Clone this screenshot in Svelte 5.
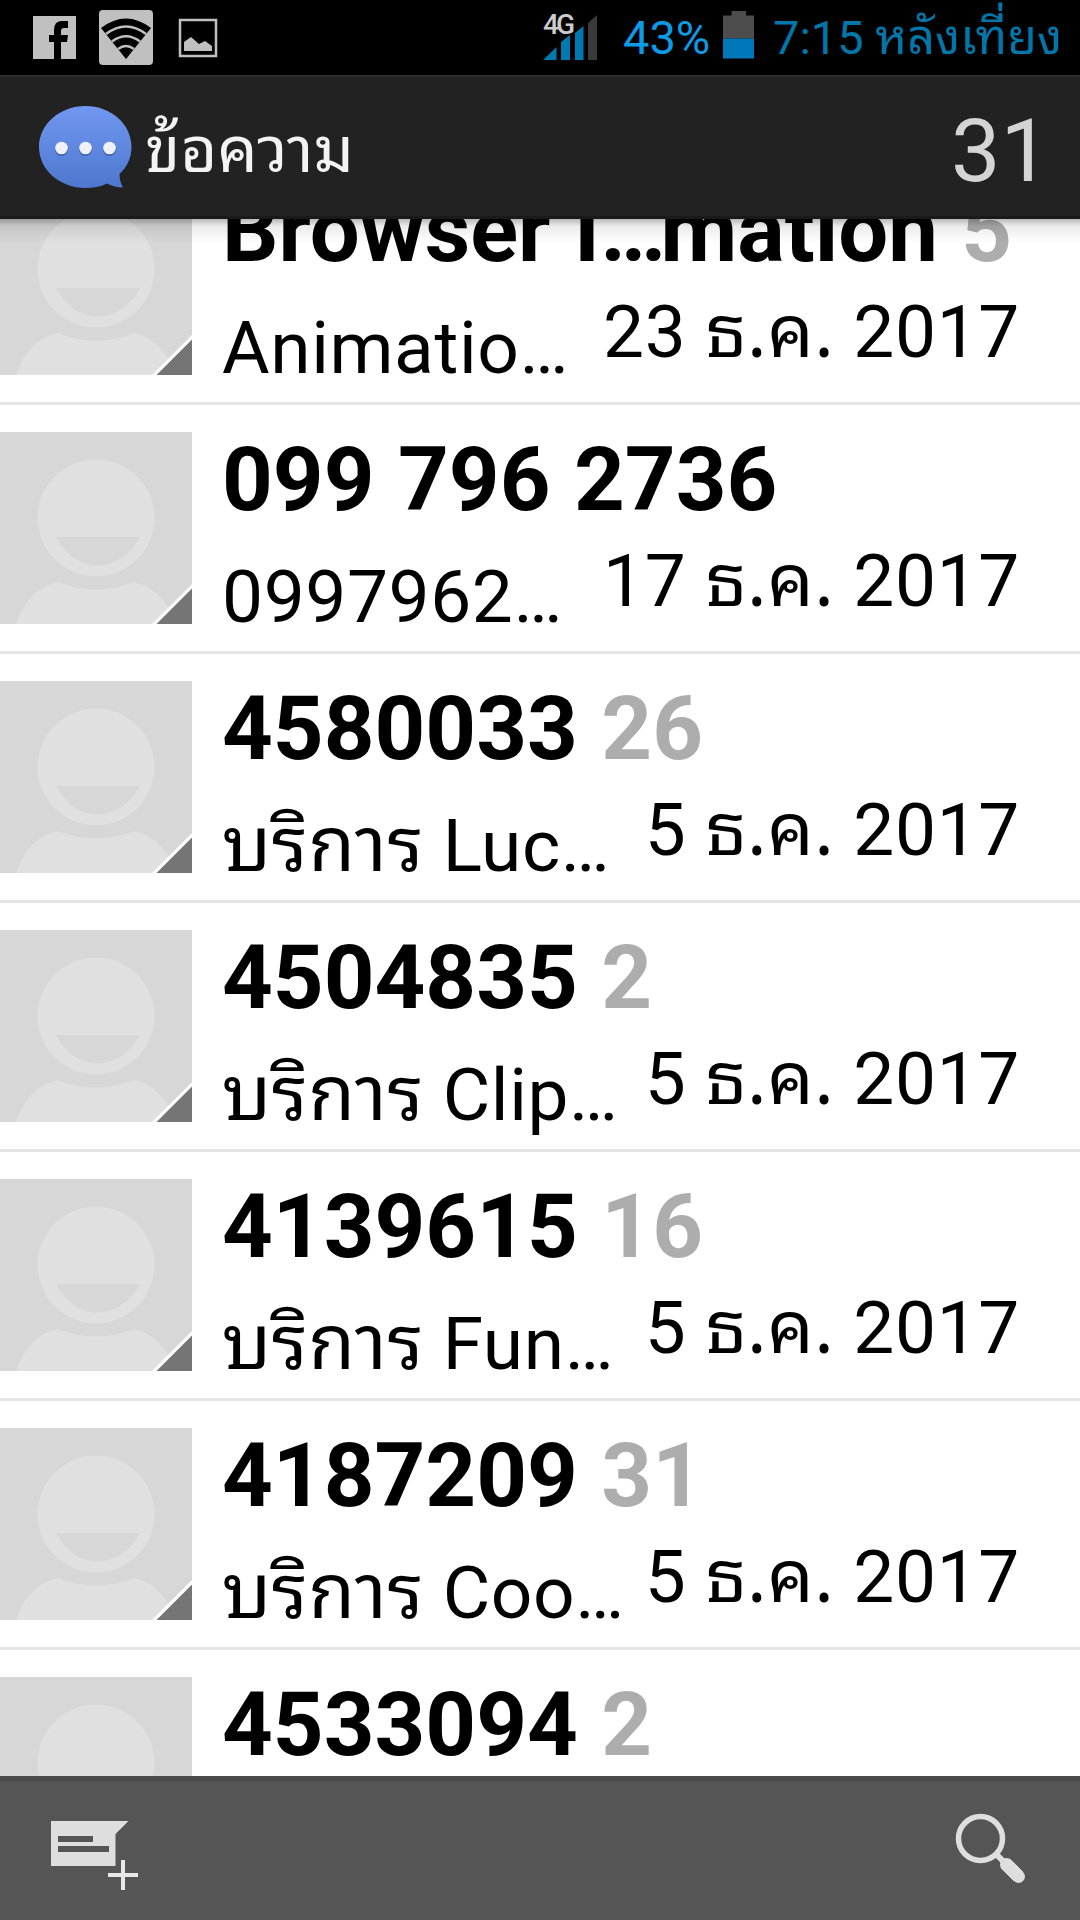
<script>
	const conversations = [
		{ id: 1, name: 'Browser I', nameEnd: 'mation', count: 5, thai: '', snippet: 'Animatio…', date: ['23', '2017'] },
		{ id: 2, name: '099 796 2736', count: null, thai: '', snippet: '0997962…', date: ['17', '2017'] },
		{ id: 3, name: '4580033', count: 26, thai: 'บริการ', snippet: 'Luc…', date: ['5', '2017'] },
		{ id: 4, name: '4504835', count: 2, thai: 'บริการ', snippet: 'Clip…', date: ['5', '2017'] },
		{ id: 5, name: '4139615', count: 16, thai: 'บริการ', snippet: 'Fun…', date: ['5', '2017'] },
		{ id: 6, name: '4187209', count: 31, thai: 'บริการ', snippet: 'Coo…', date: ['5', '2017'] },
		{ id: 7, name: '4533094', count: 2, thai: '', snippet: '', date: null }
	];
	const unread = 31;
</script>

<div class="screen">
	<div class="status-bar">
		<svg class="notifications" width="190" height="60" viewBox="30 8 190 60">
			<path fill="#c0c0c0" d="M33 16H76V59H61V42H67L68 35H61V31Q61 28 64 28H68V21H62Q54 21 54 30V35H49V42H54V59H33Z" />
			<rect x="99" y="10" width="54" height="55" rx="4" fill="#c0c0c0" />
			<path d="M101 28Q126 9 151 28L126 59Z" fill="#000" />
			<path d="M106 34Q126 19 146 34M112 41.500Q126 31 140 41.500M118 49Q126 43 134 49" fill="none" stroke="#c0c0c0" stroke-width="2.500" />
			<rect x="180" y="20" width="36" height="36" fill="none" stroke="#c0c0c0" stroke-width="2.500" />
			<path d="M184 51V42L191 37L199 44L205 41L212 46V51Z" fill="#c0c0c0" />
		</svg>
		<div class="signal">
			<span class="network">4G</span>
			<svg width="55" height="46" viewBox="543 15 55 46">
				<path d="M543 60L556.500 47V60ZM561 60V42L570 35V60ZM575 60V33L583.500 26V60Z" fill="#0078b0" />
				<path d="M588 60V23L597 15V60Z" fill="#3a3a3a" />
			</svg>
		</div>
		<span class="percent">43%</span>
		<svg class="battery" width="31" height="48" viewBox="0 0 31 48">
			<path d="M0 4.500H8.500V0H23V4.500H31V27.500H0Z" fill="#4d4d4d" />
			<rect y="27.500" width="31" height="20" fill="#0077b8" />
		</svg>
		<span class="clock">7:15 <span class="thai">หลังเที่ยง</span></span>
	</div>

	<header>
		<svg class="logo" width="94" height="84" viewBox="38 105 94 84">
			<defs>
				<linearGradient id="bubble" x1="0" y1="0" x2="0" y2="1">
					<stop offset="0" stop-color="#7297f2" />
					<stop offset="1" stop-color="#4d78cd" />
				</linearGradient>
			</defs>
			<path fill="url(#bubble)" d="M85.500 106C111 106 131.500 124 131.500 147C131.500 158 127 167 119.500 174C119.500 180 121 184 123 187.500C117 187.500 111 185.500 107 183.500C100 187 93 188 85.500 188C60 188 39 170 39 147C39 124 60 106 85.500 106Z" />
			<g fill="#365fae">
				<circle cx="61.500" cy="149.500" r="6.500" />
				<circle cx="85.500" cy="149.500" r="6.500" />
				<circle cx="109.500" cy="149.500" r="6.500" />
			</g>
			<g fill="#f0f1f6">
				<circle cx="61.500" cy="148" r="6.300" />
				<circle cx="85.500" cy="148" r="6.300" />
				<circle cx="109.500" cy="148" r="6.300" />
			</g>
		</svg>
		<h1>ข้อความ</h1>
		<span class="unread">{unread}</span>
	</header>

	<main>
		<div class="list">
			{#each conversations as item (item.id)}
				<div class="row">
					<svg class="avatar" width="192" height="192" viewBox="0 0 192 192">
						<rect width="192" height="192" fill="#d7d7d7" />
						<circle cx="96" cy="86" r="58.500" fill="#e0e0e0" />
						<path d="M56 105H140C130 123 114 133.500 98 133.500C80 133.500 66 123 56 105Z" fill="#d7d7d7" />
						<path d="M16 192C24 170 36 155 58 150C82 160 110 160 134 150C154 154 168 170 176 192Z" fill="#e0e0e0" />
						<path d="M152 192L192 152V192Z" fill="#fff" />
						<path d="M156.500 192L192 156.500V192Z" fill="#757575" />
					</svg>
					<div class="body">
						<div class="name">
							{item.name}{#if item.nameEnd}<span class="ellipsis">…</span>{item.nameEnd}{/if}
							{#if item.count}<span class="count">{item.count}</span>{/if}
						</div>
						{#if item.date}
							<div class="detail">
								<span class="snippet">
									{#if item.thai}<span class="thai">{item.thai}</span>{/if}
									{item.snippet}
								</span>
								<span class="date">{item.date[0]} <span class="thai-month">ธ.ค.</span> {item.date[1]}</span>
							</div>
						{/if}
					</div>
				</div>
			{/each}
		</div>
	</main>

	<footer>
		<svg class="compose" width="88" height="70" viewBox="51 1821 88 70">
			<path d="M51 1821H128.500L115.500 1834V1866H51Z" fill="#dedede" />
			<path d="M58 1836H93V1842H58ZM58 1846H109V1852H58Z" fill="#555" />
			<path d="M108 1875H138M123 1860V1890" stroke="#e8e8e8" stroke-width="4" />
		</svg>
		<svg class="search" width="70" height="71" viewBox="955 1813 70 71">
			<circle cx="980.500" cy="1838.500" r="22" fill="none" stroke="#dedede" stroke-width="5.500" />
			<path d="M996 1854L1004 1862" stroke="#dedede" stroke-width="6" />
			<path d="M1005 1863L1018.500 1876.500" stroke="#dedede" stroke-width="13" />
			<path d="M1006.500 1864.500L1018.500 1876.500" stroke="#dedede" stroke-width="13" stroke-linecap="round" />
		</svg>
	</footer>
</div>

<style>
	:global(body) {
		margin: 0;
		background: #fff;
	}

	.screen {
		display: flex;
		flex-direction: column;
		width: 1080px;
		height: 1920px;
		overflow: hidden;
		font-family: Roboto, sans-serif;
		color: #000;
	}

	.thai,
	.thai-month,
	h1 {
		font-family: "Droid Sans Thai", "Noto Sans Thai Looped", Loma, Waree, Garuda, Roboto, sans-serif;
	}

	.thai,
	.thai-month {
		line-height: 0;
	}

	.thai {
		font-size: 1.03em;
	}

	.status-bar {
		display: flex;
		flex: none;
		align-items: flex-start;
		height: 75px;
		padding-left: 30px;
		background: #000;
		font-size: 47px;
		line-height: 75px;
		white-space: nowrap;
	}

	.notifications {
		margin-top: 8px;
	}

	.signal {
		position: relative;
		width: 55px;
		height: 46px;
		margin: 15px 0 0 323px;
		line-height: 0;
	}

	.network {
		position: absolute;
		top: 0;
		left: 0;
		font-size: 28px;
		font-weight: 500;
		line-height: 20px;
		letter-spacing: -3px;
		color: #ccc;
	}

	.percent {
		width: 98px;
		margin-left: 25px;
		color: #0c9be6;
	}

	.battery {
		margin-top: 11px;
		margin-left: 2px;
	}

	.clock {
		margin-left: 19px;
		color: #0077ab;
	}

	header {
		display: flex;
		flex: none;
		align-items: center;
		box-sizing: border-box;
		height: 144px;
		padding: 0 30px 0 38px;
		border-top: 2px solid #2e2e2e;
		border-bottom: 3px solid #1a1a1a;
		background: #222;
		white-space: nowrap;
	}

	h1 {
		margin: -6px 0 0 13px;
		font-size: 63.500px;
		font-weight: 400;
		color: #f3f3f3;
	}

	.unread {
		margin: 8px 0 0 auto;
		font-size: 88px;
		line-height: 80px;
		color: #d4d4d4;
	}

	main {
		position: relative;
		flex: 1;
		display: flex;
		flex-direction: column;
		min-height: 0;
		overflow: hidden;
	}

	main::before {
		content: "";
		position: absolute;
		top: 0;
		left: 0;
		right: 0;
		height: 24px;
		background: linear-gradient(rgba(0, 0, 0, 0.28), rgba(0, 0, 0, 0.08) 30%, rgba(0, 0, 0, 0));
	}

	/* scrolled so that the first row is partly under the header */
	.list {
		margin-top: -63px;
	}

	.row {
		display: flex;
		box-sizing: border-box;
		height: 249px;
		padding-top: 27px;
		border-bottom: 3px solid #e4e4e4;
	}

	.avatar {
		flex: none;
	}

	.body {
		flex: 1;
		padding: 1px 60px 0 30px;
		white-space: nowrap;
	}

	.name {
		height: 104px;
		font-size: 88.600px;
		font-weight: 700;
		line-height: 94px;
		word-spacing: 1.500px;
	}

	.ellipsis {
		letter-spacing: -5px;
	}

	.count {
		color: #adadad;
	}

	.detail {
		display: flex;
		justify-content: space-between;
		font-size: 73px;
		line-height: 84px;
	}

	.snippet {
		padding-top: 18px;
		letter-spacing: 0.600px;
	}

	.snippet .thai {
		font-size: 1.043em;
	}

	.date {
		padding-top: 2px;
		letter-spacing: 0.650px;
	}

	footer {
		display: flex;
		flex: none;
		align-items: center;
		justify-content: space-between;
		box-sizing: border-box;
		height: 144px;
		padding: 0 55px 0 51px;
		border-top: 5px solid #4a4a4a;
		background: #555;
	}

	.compose {
		margin-top: 10px;
	}

	.search {
		margin-bottom: 4px;
	}
</style>
